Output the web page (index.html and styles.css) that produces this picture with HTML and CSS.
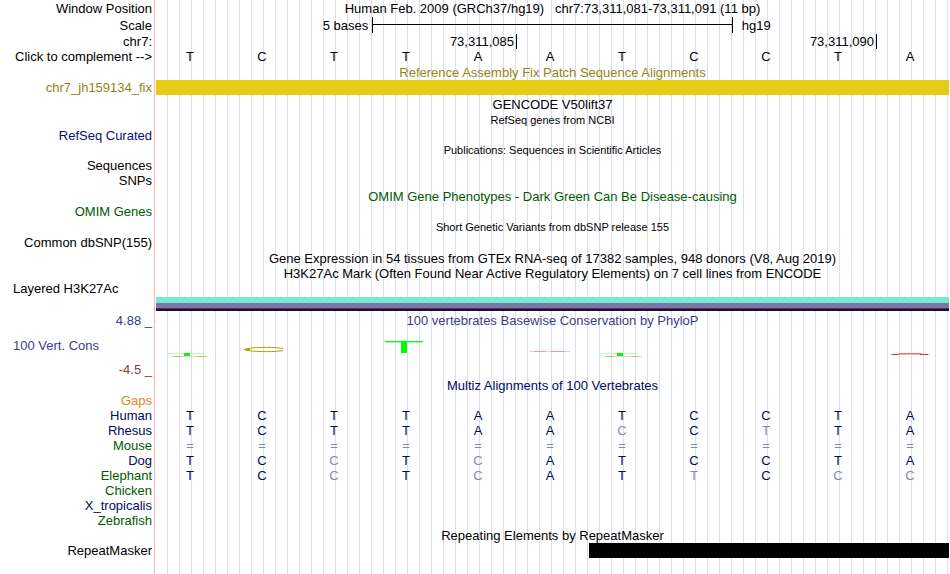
FILE: index.html
```
<!DOCTYPE html>
<html lang="en">
<head>
    <meta charset="UTF-8">
    <meta name="viewport" content="width=device-width, initial-scale=1.0">
    <title>Human chr7:73,311,081-73,311,091 - Genome Browser</title>
    <link rel="stylesheet" href="styles.css">
</head>
<body>
    <main class="browser">
        <!-- Position and ruler -->
        <div class="row row-16">
            <span class="label">Window Position</span>
            <h1 class="title position">Human Feb. 2009 (GRCh37/hg19)   chr7:73,311,081-73,311,091 (11 bp)</h1>
        </div>
        <div class="row row-18">
            <span class="label">Scale</span>
            <div class="scale">
                <span class="scale-size">5 bases</span>
                <span class="scale-line"></span>
                <span class="scale-db">hg19</span>
            </div>
        </div>
        <div class="row">
            <span class="label">chr7:</span>
            <div class="ruler">
                <span class="tick">73,311,085</span>
                <span class="tick">73,311,090</span>
            </div>
        </div>
        <table class="bases">
            <tr>
                <th scope="row"><button type="button" class="complement">Click to complement --&gt;</button></th>
                <td>T</td><td>C</td><td>T</td><td>T</td><td>A</td><td>A</td><td>T</td><td>C</td><td>C</td><td>T</td><td>A</td>
            </tr>
        </table>

        <!-- Fix patches -->
        <div class="row row-16 gold">
            <h2 class="title">Reference Assembly Fix Patch Sequence Alignments</h2>
        </div>
        <div class="row gold">
            <span class="label">chr7_jh159134_fix</span>
            <div class="bar patch"></div>
        </div>

        <!-- Genes and variants -->
        <div class="row row-18">
            <h2 class="title">GENCODE V50lift37</h2>
        </div>
        <div class="row">
            <h2 class="title small">RefSeq genes from NCBI</h2>
        </div>
        <div class="row blue">
            <span class="label">RefSeq Curated</span>
        </div>
        <div class="row">
            <h2 class="title small">Publications: Sequences in Scientific Articles</h2>
        </div>
        <div class="row">
            <span class="label">Sequences</span>
        </div>
        <div class="row">
            <span class="label">SNPs</span>
        </div>
        <div class="row row-16 green">
            <h2 class="title">OMIM Gene Phenotypes - Dark Green Can Be Disease-causing</h2>
        </div>
        <div class="row green">
            <span class="label">OMIM Genes</span>
        </div>
        <div class="row row-16">
            <h2 class="title small">Short Genetic Variants from dbSNP release 155</h2>
        </div>
        <div class="row">
            <span class="label">Common dbSNP(155)</span>
        </div>
        <div class="row row-16">
            <h2 class="title">Gene Expression in 54 tissues from GTEx RNA-seq of 17382 samples, 948 donors (V8, Aug 2019)</h2>
        </div>
        <div class="row">
            <h2 class="title">H3K27Ac Mark (Often Found Near Active Regulatory Elements) on 7 cell lines from ENCODE</h2>
        </div>
        <div class="row">
            <span class="label label-left">Layered H3K27Ac</span>
        </div>
        <div class="row row-16">
            <div class="bar histone"></div>
        </div>

        <!-- Conservation -->
        <div class="row row-16 violet">
            <span class="label">4.88 _</span>
            <h2 class="title">100 vertebrates Basewise Conservation by PhyloP</h2>
        </div>
        <div class="row row-signal violet">
            <span class="label label-left">100 Vert. Cons</span>
            <div class="signal">
                <svg width="72" height="34" viewBox="0 0 72 34">
                    <path d="M14 25.5H51" stroke="#b4ffb4" fill="none"/>
                    <path d="M17 28.5H55" stroke="#e0e0a0" fill="none"/>
                    <path d="M20 28.5H28M44 28.5H52" stroke="#c0c050" fill="none"/>
                    <rect x="30" y="25" width="6" height="3" fill="#00ff00"/>
                </svg>
                <svg width="72" height="34" viewBox="0 0 72 34">
                    <path d="M57 20.5C52 19 29 19 23 20.5C17 21 17 22 23 22.5C29 24 52 24 57 22.5" stroke="#a8a800" fill="none"/>
                    <path d="M17 21.5L24 20V23Z" fill="#a8a800"/>
                </svg>
                <svg width="72" height="34" viewBox="0 0 72 34"></svg>
                <svg width="72" height="34" viewBox="0 0 72 34">
                    <path d="M15 13.5H53" stroke="#00ff00" fill="none"/>
                    <path d="M16 14.5H52" stroke="#a0ffa0" fill="none"/>
                    <rect x="31" y="14" width="6" height="11" fill="#00ff00"/>
                </svg>
                <svg width="72" height="34" viewBox="0 0 72 34"></svg>
                <svg width="72" height="34" viewBox="0 0 72 34">
                    <path d="M16 23.5H56" stroke="#ffc8c8" fill="none"/>
                    <path d="M20 23.5H31M37 23.5H51" stroke="#ff9090" fill="none"/>
                </svg>
                <svg width="72" height="34" viewBox="0 0 72 34">
                    <path d="M15 25.5H52" stroke="#b4ffb4" fill="none"/>
                    <path d="M17 28.5H56" stroke="#e0e0a0" fill="none"/>
                    <path d="M20 28.5H28M45 28.5H53" stroke="#c0c050" fill="none"/>
                    <rect x="31" y="25" width="6" height="3" fill="#00ff00"/>
                </svg>
                <svg width="72" height="34" viewBox="0 0 72 34"></svg>
                <svg width="72" height="34" viewBox="0 0 72 34"></svg>
                <svg width="72" height="34" viewBox="0 0 72 34"></svg>
                <svg width="72" height="34" viewBox="0 0 72 34">
                    <path d="M16 26.5H56" stroke="#ffb4b4" fill="none"/>
                    <path d="M18 26.5H25M46 26.5H54" stroke="#ff2020" fill="none"/>
                    <path d="M25 25.5H47" stroke="#ff6464" fill="none"/>
                </svg>
            </div>
        </div>
        <div class="row red">
            <span class="label">-4.5 _</span>
        </div>

        <!-- Multiz alignment, td.diff is a base that differs from human -->
        <div class="row row-16 navy">
            <h2 class="title">Multiz Alignments of 100 Vertebrates</h2>
        </div>
        <table class="bases navy">
            <tr><th scope="row" class="orange">Gaps</th><td></td><td></td><td></td><td></td><td></td><td></td><td></td><td></td><td></td><td></td><td></td></tr>
            <tr><th scope="row">Human</th><td>T</td><td>C</td><td>T</td><td>T</td><td>A</td><td>A</td><td>T</td><td>C</td><td>C</td><td>T</td><td>A</td></tr>
            <tr><th scope="row">Rhesus</th><td>T</td><td>C</td><td>T</td><td>T</td><td>A</td><td>A</td><td class="diff">C</td><td>C</td><td class="diff">T</td><td>T</td><td>A</td></tr>
            <tr class="unaligned"><th scope="row" class="green">Mouse</th><td>=</td><td>=</td><td>=</td><td>=</td><td>=</td><td>=</td><td>=</td><td>=</td><td>=</td><td>=</td><td>=</td></tr>
            <tr><th scope="row">Dog</th><td>T</td><td>C</td><td class="diff">C</td><td>T</td><td class="diff">C</td><td>A</td><td>T</td><td>C</td><td>C</td><td>T</td><td>A</td></tr>
            <tr><th scope="row" class="green">Elephant</th><td>T</td><td>C</td><td class="diff">C</td><td>T</td><td class="diff">C</td><td>A</td><td>T</td><td class="diff">T</td><td>C</td><td class="diff">C</td><td class="diff">C</td></tr>
            <tr><th scope="row" class="green">Chicken</th></tr>
            <tr><th scope="row">X_tropicalis</th></tr>
            <tr><th scope="row" class="green">Zebrafish</th></tr>
        </table>

        <!-- Repeats -->
        <div class="row">
            <h2 class="title">Repeating Elements by RepeatMasker</h2>
        </div>
        <div class="row">
            <span class="label">RepeatMasker</span>
            <div class="repeats">
                <div class="bar repeat"></div>
            </div>
        </div>
    </main>
</body>
</html>
```
FILE: styles.css
```
body {
    margin: 0;
    background: #fff;
    color: #000;
    font-family: "Liberation Sans", Arial, Helvetica, sans-serif;
    font-size: 13px;
    line-height: 15px;
}
/* Pink divider and the blue guide lines behind all tracks */
.browser {
    min-height: 100vh;
    margin-right: 1px;
    background:
        linear-gradient(#ffb4b4, #ffb4b4) 154px 0 / 1px 100% no-repeat,
        repeating-linear-gradient(to right, transparent 0 11px, #dcdcf5 11px 12px) 156px 0 no-repeat;
}
.row {
    display: grid;
    grid-template-columns: 156px 1fr;
    align-items: center;
    height: 15px;
    white-space: nowrap;
}
.row-16 {
    height: 16px;
}
.row-18 {
    height: 18px;
}
.row-signal {
    height: 34px;
}
.label {
    grid-column: 1;
    padding-right: 4px;
    text-align: right;
}
.label-left {
    padding-left: 13px;
    text-align: left;
}
.title {
    grid-column: 2;
    margin: 0;
    font-size: 13px;
    font-weight: normal;
    text-align: center;
}
.position {
    white-space: pre;
}
.small {
    font-size: 11px;
}

/* Ruler */
.scale {
    display: grid;
    grid-template-columns: 3fr 5fr 3fr;
    align-items: center;
}
.scale-size {
    padding-right: 4px;
    text-align: right;
}
.scale-line {
    height: 16px;
    border: solid #000;
    border-width: 0 1px;
    background: linear-gradient(#000, #000) 0 7px / 100% 1px no-repeat;
}
.scale-db {
    padding-left: 9px;
}
.ruler {
    display: grid;
    grid-template-columns: 5fr 5fr 1fr;
    padding-left: 1px;
}
.tick {
    padding-right: 2px;
    border-right: 1px solid #000;
    text-align: right;
}

/* One column per base */
.bases {
    width: calc(100% - 3px);
    table-layout: fixed;
    border-collapse: collapse;
}
.bases th {
    width: 152px;
    height: 15px;
    padding: 0 2px 0 0;
    font-weight: normal;
    text-align: right;
    white-space: nowrap;
}
.bases td {
    padding: 0;
    text-align: center;
}
.complement {
    display: block;
    margin-left: auto;
    padding: 0;
    border: none;
    background: none;
    color: inherit;
    font: inherit;
    cursor: pointer;
}
.bases .diff,
.unaligned td {
    color: #8288b5;
}

/* Track items */
.bar {
    height: 15px;
}
.patch {
    background: #e6cb17;
}
.histone {
    grid-column: 2;
    height: 14px;
    background: linear-gradient(#77eccd 0 6px, #7878aa 6px 11px, #6e2a50 11px 12px, #180f3c 12px);
}
.signal {
    display: grid;
    grid-template-columns: repeat(11, 1fr);
    justify-items: center;
    margin: 0 3px 0 -2px;
}
.repeats {
    display: grid;
    grid-template-columns: 6fr 5fr;
}
.repeat {
    grid-column: 2;
    background: #000;
}

/* Track colours */
.gold {
    color: #948514;
}
.blue {
    color: #0c0c78;
}
.navy {
    color: #000a64;
}
.green {
    color: #005a00;
}
.violet {
    color: #3c3c8c;
}
.red {
    color: #8c3c3c;
}
.orange {
    color: #e0861a;
}
```
